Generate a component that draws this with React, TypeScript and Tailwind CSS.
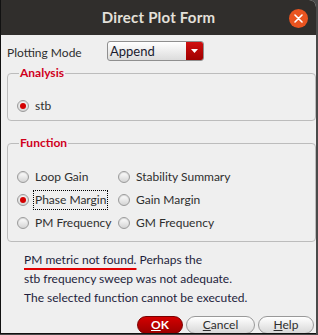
import React from "react";

function Radio({ checked = false }: { checked?: boolean }) {
  return (
    <span className="relative inline-flex w-[12px] h-[12px] rounded-full border border-[#9b9b9b] bg-gradient-to-b from-[#ffffff] to-[#d4d4d4] items-center justify-center shrink-0 shadow-[inset_0_1px_1px_rgba(0,0,0,0.15)]">
      {checked && <span className="w-[6px] h-[6px] rounded-full bg-[#d40000]" />}
    </span>
  );
}

function Option({ label, checked = false, focus = false }: { label: string; checked?: boolean; focus?: boolean }) {
  return (
    <div className="flex items-center h-[23px] gap-[5px]">
      <Radio checked={checked} />
      <span className={focus ? "outline outline-1 outline-dotted outline-black px-[1px] leading-[18px]" : "px-[1px] leading-[18px]"}>
        {label}
      </span>
    </div>
  );
}

export default function App() {
  return (
    <div
      className="w-[318px] h-[335px] bg-[#4a4a4a] text-[12px] text-[#2e2e2e]"
      style={{ fontFamily: "Lato, 'Open Sans', sans-serif" }}
    >
      <div className="w-[316px] h-[334px] flex flex-col border-l border-b border-[#111] bg-[#efefef] rounded-tr-[7px] overflow-hidden">
        {/* Title bar */}
        <div className="relative h-[35px] shrink-0 bg-[#302e2c] flex items-center justify-center">
          <span className="text-[15px] font-bold text-[#e3e0da] tracking-[0.2px]" style={{ fontFamily: "Lato, sans-serif" }}>
            Direct Plot Form
          </span>
          <div className="absolute left-[288px] top-[9px] w-[19px] h-[19px] rounded-full bg-[#e95420] flex items-center justify-center">
            <svg width="9" height="9" viewBox="0 0 9 9">
              <path d="M1 1L8 8M8 1L1 8" stroke="#fff" strokeWidth="1.6" strokeLinecap="round" />
            </svg>
          </div>
        </div>

        {/* Body */}
        <div className="flex flex-col pl-[6px] pr-[0px]">
          <div className="flex items-center h-[20px] mt-[6px]">
            <span className="w-[100px] pt-[4px]">Plotting Mode</span>
            <div className="flex h-[20px] w-[97px] rounded-[3px] border border-[#8f8f8f] overflow-hidden bg-gradient-to-b from-[#ffffff] to-[#dcdcdc]">
              <span className="flex-1 pl-[2px] text-[13px] leading-[18px] text-[#1a1a2e]">Append</span>
              <span className="w-[17px] bg-gradient-to-b from-[#d01010] to-[#a00000] flex items-center justify-center">
                <svg width="7" height="4" viewBox="0 0 7 4">
                  <path d="M0 0H7L3.5 4Z" fill="#fff" />
                </svg>
              </span>
            </div>
          </div>

          <fieldset className="mt-[5px] border border-[#bcbcbc] rounded-[4px] h-[55px] px-[9px]">
            <legend className="ml-[2px] px-[1px] text-[#d0001c] font-bold leading-[14px]">Analysis</legend>
            <div className="mt-[14px]">
              <Option label="stb" checked />
            </div>
          </fieldset>

          <fieldset className="mt-[15px] border border-[#bcbcbc] rounded-[4px] h-[106px] px-[9px]">
            <legend className="ml-[2px] px-[1px] text-[#d0001c] font-bold leading-[14px]">Function</legend>
            <div className="mt-[15px] grid grid-cols-[101px_1fr]">
              <Option label="Loop Gain" />
              <Option label="Stability Summary" />
              <Option label="Phase Margin" checked focus />
              <Option label="Gain Margin" />
              <Option label="PM Frequency" />
              <Option label="GM Frequency" />
            </div>
          </fieldset>

          <div className="pl-[17px] mt-[8px] flex flex-col text-[#1e1e3c]">
            <div className="h-[19px] leading-[19px]">
              <span className="underline decoration-[#e00000] decoration-2 underline-offset-[4px]">PM metric not found.</span> Perhaps the
            </div>
            <div className="h-[19px] leading-[19px]">stb frequency sweep was not adequate.</div>
            <div className="h-[19px] leading-[19px]">The selected function cannot be executed.</div>
          </div>

          <div className="flex justify-end gap-[3px] mt-[9px] pr-[2px]">
            <button className="w-[46px] h-[18px] rounded-full bg-gradient-to-b from-[#d40000] to-[#9c0000] border border-[#7a0000] text-white font-bold text-[12px] leading-[16px]">
              <span className="underline">O</span>K
            </button>
            <button className="w-[69px] h-[18px] rounded-full bg-gradient-to-b from-[#ffffff] to-[#d8d8d8] border border-[#999] text-[#2e2e2e] text-[12px] leading-[16px]">
              <span className="underline">C</span>ancel
            </button>
            <button className="w-[56px] h-[18px] rounded-full bg-gradient-to-b from-[#ffffff] to-[#d8d8d8] border border-[#999] text-[#2e2e2e] text-[12px] leading-[16px]">
              <span className="underline">H</span>elp
            </button>
          </div>
        </div>
      </div>
    </div>
  );
}
